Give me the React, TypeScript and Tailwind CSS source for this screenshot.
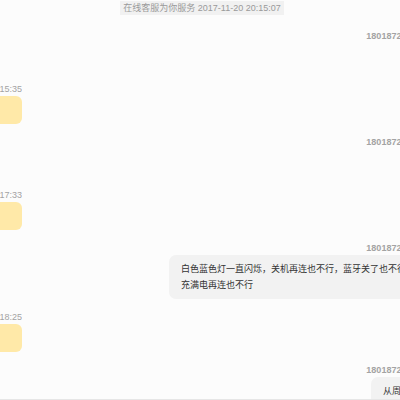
import * as React from "react";

type Msg =
  | { side: "left"; label: string }
  | { side: "right"; label: string; lines: string[] };

const messages: Msg[] = [
  { side: "right", label: "18018729876 2017-11-20 20:15:20", lines: ["你好"] },
  { side: "left", label: "客服小米 2017-11-20 20:15:35" },
  { side: "right", label: "18018729876 2017-11-20 20:17:10", lines: ["在吗"] },
  { side: "left", label: "客服小米 2017-11-20 20:17:33" },
  {
    side: "right",
    label: "18018729876 2017-11-20 20:18:02",
    lines: [
      "白色蓝色灯一直闪烁，关机再连也不行，蓝牙关了也不行，手机重启以后也不行",
      "充满电再连也不行",
    ],
  },
  { side: "left", label: "客服小米 2017-11-20 20:18:25" },
  { side: "right", label: "18018729876 2017-11-20 20:19:40", lines: ["从周一开始就一直是这样的?"] },
];

const App = () => {
  return (
    <div
      className="w-[400px] h-[400px] overflow-hidden bg-[#fcfcfc] flex flex-col text-[9px]"
      style={{ fontFamily: '"Liberation Sans", Arial, "Noto Sans CJK SC", sans-serif' }}
    >
      <div className="flex-1 min-h-0 overflow-hidden">
        <div className="flex justify-center pt-[1px] pl-[4px]">
          <span className="bg-[#f1f1f1] text-[#9a9a9a] px-[3px] leading-[14px]">
            在线客服为你服务 2017-11-20 20:15:07
          </span>
        </div>

        <div className="w-[508px] flex flex-col pt-[15px]">
          {messages.map((m, i) =>
            m.side === "left" ? (
              <div key={i} className="w-[22px] overflow-hidden flex flex-col items-end mb-[12px]">
                <div className="whitespace-nowrap leading-[12px] text-[#a3a3a3] mb-[1px]">
                  {m.label}
                </div>
                <div className="w-[120px] h-[28px] shrink-0 rounded-[6px] bg-[#ffe9a8]" />
              </div>
            ) : (
              <div key={i} className="self-end flex flex-col items-end mb-[12px]">
                <div className="whitespace-nowrap leading-[12px] text-[#a3a3a3] font-semibold mb-[1px]">
                  {m.label}
                </div>
                <div className="rounded-[7px] bg-[#f2f2f2] text-[#333] px-[12px] py-[6px] leading-[16px] whitespace-nowrap">
                  {m.lines.map((l, j) => (
                    <div key={j}>{l}</div>
                  ))}
                </div>
              </div>
            )
          )}
        </div>
      </div>
      <div className="h-[1px] shrink-0 bg-[#e6e6e6]" />
    </div>
  );
};

export default App;
